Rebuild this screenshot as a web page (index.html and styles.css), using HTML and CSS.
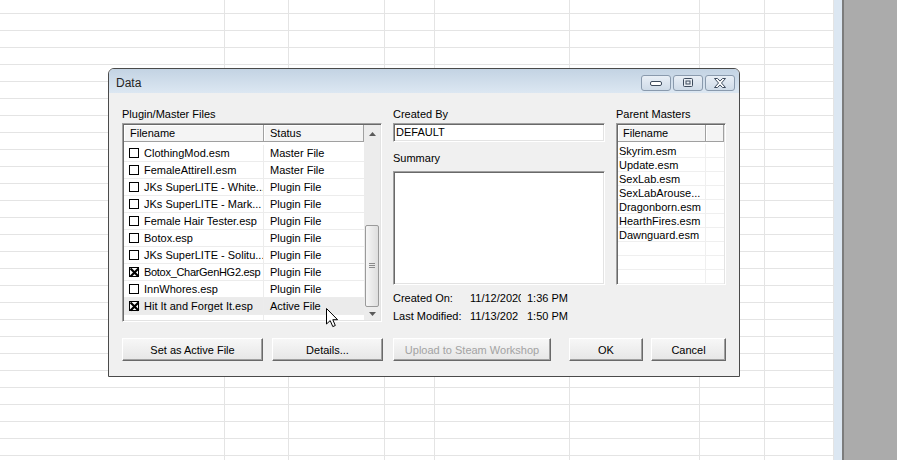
FILE: index.html
```html
<!DOCTYPE html>
<html lang="en">
<head>
	<meta charset="UTF-8">
	<title>Data</title>
	<meta name="viewport" content="width=device-width, initial-scale=1">
	<link rel="stylesheet" href="styles.css">
</head>
<body>
	<!-- spreadsheet behind the dialog -->
	<div class="sheet">
		<div></div><div></div><div></div><div></div><div></div><div></div><div></div><div></div>
	</div>
	<div class="frame-strip"></div>
	<div class="app-gray"></div>

	<div class="dialog">
		<div class="titlebar">
			<span class="title">Data</span>
			<div class="caps">
				<span class="cap">
					<svg width="14" height="8" viewBox="0 0 14 8"><rect x="1.5" y="2.5" width="11" height="4" rx="1.5" fill="#fff" stroke="#3c4a5c"/></svg>
				</span>
				<span class="cap">
					<svg width="12" height="10" viewBox="0 0 12 10"><rect x="1.5" y="0.5" width="9" height="8" rx="1" fill="#e9eef4" stroke="#3c4a5c"/><rect x="4" y="3" width="4" height="3" fill="none" stroke="#3c4a5c"/></svg>
				</span>
				<span class="cap">
					<svg width="16" height="12" viewBox="0 0 16 12"><path d="M2.5 1.5 h3 l2.5 2.6 l2.5 -2.6 h3 l-4 4.5 l4 4.5 h-3 l-2.5 -2.6 l-2.5 2.6 h-3 l4 -4.5 z" fill="#fff" stroke="#3c4a5c" stroke-linejoin="round"/></svg>
				</span>
			</div>
		</div>

		<div class="client">
			<div class="panes">
				<!-- plugin list -->
				<div class="pane">
					<div class="label">Plugin/Master Files</div>
					<div class="sunken files">
						<div class="lv-main">
							<div class="lv-head">
								<span class="h-name">Filename</span><span class="h-status">Status</span>
							</div>
							<div class="lv-body">
								<div class="lv-row"><span class="c-name"><i class="chk"></i>ClothingMod.esm</span><span class="c-status">Master File</span></div>
								<div class="lv-row"><span class="c-name"><i class="chk"></i>FemaleAttireII.esm</span><span class="c-status">Master File</span></div>
								<div class="lv-row"><span class="c-name"><i class="chk"></i>JKs SuperLITE - White...</span><span class="c-status">Plugin File</span></div>
								<div class="lv-row"><span class="c-name"><i class="chk"></i>JKs SuperLITE - Mark...</span><span class="c-status">Plugin File</span></div>
								<div class="lv-row"><span class="c-name"><i class="chk"></i>Female Hair Tester.esp</span><span class="c-status">Plugin File</span></div>
								<div class="lv-row"><span class="c-name"><i class="chk"></i>Botox.esp</span><span class="c-status">Plugin File</span></div>
								<div class="lv-row"><span class="c-name"><i class="chk"></i>JKs SuperLITE - Solitu...</span><span class="c-status">Plugin File</span></div>
								<div class="lv-row"><span class="c-name tight"><i class="chk on"><svg width="11" height="11" viewBox="0 0 11 11"><path d="M1.5 1.5 L9.5 9.5 M9.5 1.5 L1.5 9.5" stroke="#000" stroke-width="2.2"/></svg></i>Botox_CharGenHG2.esp</span><span class="c-status">Plugin File</span></div>
								<div class="lv-row"><span class="c-name"><i class="chk"></i>InnWhores.esp</span><span class="c-status">Plugin File</span></div>
								<div class="lv-row hot"><span class="c-name"><i class="chk on"><svg width="11" height="11" viewBox="0 0 11 11"><path d="M1.5 1.5 L9.5 9.5 M9.5 1.5 L1.5 9.5" stroke="#000" stroke-width="2.2"/></svg></i>Hit It and Forget It.esp</span><span class="c-status">Active File</span></div>
								<div class="lv-row"><span class="c-name"></span><span class="c-status"></span></div>
							</div>
						</div>
						<div class="vscroll">
							<div class="sb-btn">
								<svg width="7" height="4" viewBox="0 0 7 4"><path d="M0 4 L3.5 0 L7 4 Z" fill="#5a5a5a"/></svg>
							</div>
							<div class="sb-track">
								<div class="sb-thumb">
									<svg width="6" height="6" viewBox="0 0 6 6"><path d="M0 0.5 H6 M0 2.5 H6 M0 4.5 H6" stroke="#8a8a8a"/></svg>
								</div>
							</div>
							<div class="sb-btn sb-down">
								<svg width="7" height="4" viewBox="0 0 7 4"><path d="M0 0 L3.5 4 L7 0 Z" fill="#5a5a5a"/></svg>
							</div>
						</div>
					</div>
				</div>

				<!-- file info -->
				<div class="pane">
					<div class="label">Created By</div>
					<div class="sunken textbox">DEFAULT</div>
					<div class="label summary-label">Summary</div>
					<div class="sunken textarea"></div>
					<div class="info">
						<div class="info-row"><span class="info-key">Created On:</span><span class="info-date">11/12/2020</span><span class="info-time">1:36 PM</span></div>
						<div class="info-row"><span class="info-key">Last Modified:</span><span class="info-date">11/13/202</span><span class="info-time">1:50 PM</span></div>
					</div>
				</div>

				<!-- masters -->
				<div class="pane">
					<div class="label">Parent Masters</div>
					<div class="sunken masters">
						<div class="mh">
							<span class="mh-name">Filename</span><span class="mh-rest"></span>
						</div>
						<div class="m-row"><span class="m-name">Skyrim.esm</span><span class="m-rest"></span></div>
						<div class="m-row"><span class="m-name">Update.esm</span><span class="m-rest"></span></div>
						<div class="m-row"><span class="m-name">SexLab.esm</span><span class="m-rest"></span></div>
						<div class="m-row"><span class="m-name">SexLabArouse...</span><span class="m-rest"></span></div>
						<div class="m-row"><span class="m-name">Dragonborn.esm</span><span class="m-rest"></span></div>
						<div class="m-row"><span class="m-name">HearthFires.esm</span><span class="m-rest"></span></div>
						<div class="m-row"><span class="m-name">Dawnguard.esm</span><span class="m-rest"></span></div>
						<div class="m-row"><span class="m-name"></span><span class="m-rest"></span></div>
						<div class="m-row"><span class="m-name"></span><span class="m-rest"></span></div>
						<div class="m-row"><span class="m-name"></span><span class="m-rest"></span></div>
						<div class="m-row"><span class="m-name"></span><span class="m-rest"></span></div>
					</div>
				</div>
			</div>

			<div class="buttons">
				<button type="button" class="btn btn-active">Set as Active File</button>
				<button type="button" class="btn btn-details">Details...</button>
				<button type="button" class="btn btn-upload" disabled>Upload to Steam Workshop</button>
				<button type="button" class="btn btn-ok">OK</button>
				<button type="button" class="btn btn-cancel">Cancel</button>
			</div>
		</div>
	</div>

	<!-- mouse pointer -->
	<svg class="cursor" width="14" height="21" viewBox="0 0 14 21">
		<path d="M0.5 0.5 V16 L4.2 12.6 L6.8 18.6 L9.3 17.5 L6.8 11.7 H11.6 Z" fill="#fff" stroke="#000" stroke-linejoin="round"/>
	</svg>
</body>
</html>
```

FILE: styles.css
```css
* { box-sizing: border-box; }
html, body { margin: 0; padding: 0; }
body { position: relative; display: flex; width: 897px; height: 460px; overflow: hidden; background: #fff; color: #000; font: 11px "Liberation Sans", Arial, sans-serif; }

/* background spreadsheet */
.sheet { display: grid; grid-template-columns: 225px 64px 96px 50px 135px 130px 65px 69px; width: 834px; height: 460px; background: repeating-linear-gradient(to bottom, transparent 0 16px, #e4e4e4 16px 17px); background-position: 0 -3px; }
.sheet div { border-right: 1px solid #e4e4e4; }
.frame-strip { width: 8px; background: #dce7f2; }
.app-gray { flex: 1; background: #ababab; border-left: 2px solid #7c7c7c; }

/* dialog window */
.dialog { position: absolute; left: 108px; top: 68px; display: flex; flex-direction: column; width: 632px; height: 309px; border: 1px solid #4a4a4a; border-radius: 6px 6px 0 0; background: #f0f0f0; }
.titlebar { display: flex; height: 24px; padding: 0 4px 0 7px; border-radius: 5px 5px 0 0; background: linear-gradient(#c3d3e3, #dce7f2); }
.title { flex: 1; padding-top: 7px; font-size: 12px; color: #262626; }
.caps { display: flex; gap: 2px; margin-top: 6px; }
.cap { display: flex; align-items: center; justify-content: center; width: 30px; height: 16px; border: 1px solid #8a9aad; border-radius: 3px; background: linear-gradient(#e9eff6, #cfdbe8); }

.client { flex: 1; padding: 13px 13px 0; }
.panes { display: grid; grid-template-columns: 260px 212px 110px; column-gap: 11px; align-items: start; }
.label { height: 16px; margin-bottom: 1px; line-height: 16px; }

/* classic sunken edge */
.sunken { padding: 1px; border: 1px solid; border-color: #a0a0a0 #fff #fff #a0a0a0; background: #fff; box-shadow: inset 1px 1px #696969, inset -1px -1px #e3e3e3; }

/* plugin list view */
.files { display: flex; height: 199px; }
.lv-main { width: 240px; overflow: hidden; }
.lv-head { display: flex; height: 17px; line-height: 16px; }
.lv-head span { padding-left: 6px; border-right: 1px solid #a0a0a0; border-bottom: 1px solid #a0a0a0; background: #f4f4f4; box-shadow: inset 1px 1px #fff; }
.h-name { width: 140px; }
.h-status { width: 100px; }
.lv-body { padding-top: 3px; }
.lv-row { display: flex; height: 17px; line-height: 16px; border-bottom: 1px solid #ececec; white-space: nowrap; }
.lv-row.hot { background: #ebebeb; }
.c-name { display: flex; align-items: center; width: 140px; padding-left: 5px; overflow: hidden; border-right: 1px solid #ececec; }
.c-name.tight { letter-spacing: -0.3px; }
.c-status { width: 100px; padding-left: 6px; }
.chk { flex: none; display: inline-block; width: 10px; height: 10px; margin-right: 5px; border: 1px solid #000; background: #fff; }
.chk.on { position: relative; }
.chk.on svg { position: absolute; left: -1px; top: -1px; }

.vscroll { display: flex; flex-direction: column; width: 16px; background: #ececec; }
.sb-btn { display: flex; align-items: center; justify-content: center; height: 17px; }
.sb-down { height: 13px; }
.sb-track { flex: 1; display: flex; flex-direction: column; justify-content: flex-end; }
.sb-thumb { display: flex; align-items: center; justify-content: center; height: 82px; margin: 0 1px; border: 1px solid #9a9a9a; border-radius: 2px; background: linear-gradient(to right, #f6f6f6, #dedede); }

/* middle column */
.textbox { height: 19px; padding-left: 2px; line-height: 15px; }
.summary-label { margin-top: 8px; margin-bottom: 5px; }
.textarea { height: 114px; }
.info { margin-top: 4px; }
.info-row { display: flex; height: 18px; line-height: 18px; white-space: nowrap; }
.info-key { width: 77px; }
.info-date { width: 51px; overflow: hidden; }
.info-time { margin-left: 6px; }

/* parent masters */
.masters { height: 162px; overflow: hidden; }
.mh { display: flex; height: 17px; line-height: 16px; margin-bottom: 2px; }
.mh span { border-right: 1px solid #a0a0a0; border-bottom: 1px solid #a0a0a0; background: #f4f4f4; box-shadow: inset 1px 1px #fff; }
.mh-name { width: 88px; padding-left: 5px; }
.mh-rest { width: 18px; }
.m-row { display: flex; height: 14px; line-height: 14px; }
.m-name { width: 88px; padding-left: 1px; border-right: 1px solid #efefef; border-bottom: 1px solid #efefef; }
.m-rest { width: 18px; border-bottom: 1px solid #efefef; }

/* buttons */
.buttons { display: flex; margin-top: 13px; }
.btn { height: 23px; padding: 0; border: 1px solid; border-color: #fff #696969 #696969 #fff; background: linear-gradient(#f7f7f7, #e6e6e6); box-shadow: inset -1px -1px #a0a0a0; font: 11px "Liberation Sans", Arial, sans-serif; color: #000; }
.btn:disabled { color: #a3a3a3; }
.btn-active { width: 141px; }
.btn-details { width: 111px; margin-left: 9px; }
.btn-upload { width: 158px; margin-left: 10px; }
.btn-ok { width: 74px; margin-left: 18px; }
.btn-cancel { width: 75px; margin-left: 8px; }

.cursor { position: absolute; left: 326px; top: 308px; }
```
